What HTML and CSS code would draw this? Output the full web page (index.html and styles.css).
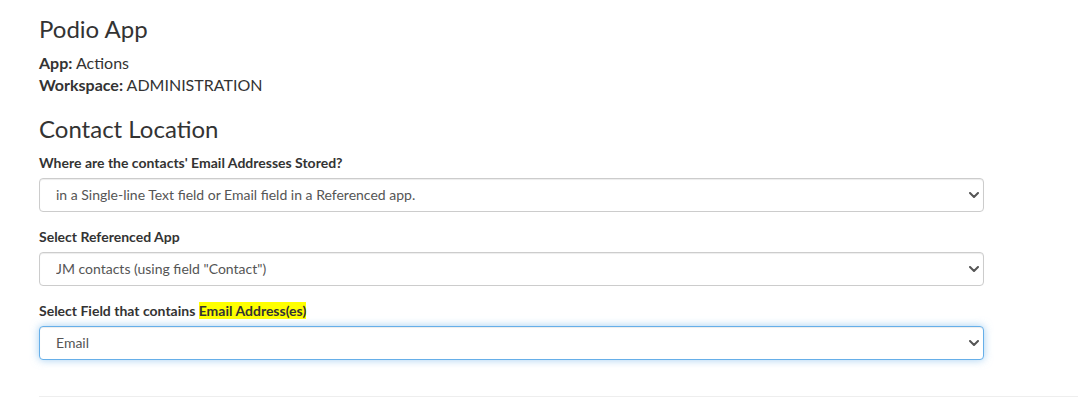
FILE: index.html
```html
<!DOCTYPE html>
<html>
<head>
<meta charset="utf-8">
<link rel="stylesheet" href="styles.css">
</head>
<body>
<div class="page">
  <h3 class="title">Podio App</h3>
  <div class="meta">
    <div><b>App:</b> Actions</div>
    <div><b>Workspace:</b> ADMINISTRATION</div>
  </div>
  <h3 class="section">Contact Location</h3>
  <form class="form">
    <div class="form-group">
      <label class="label">Where are the contacts' Email Addresses Stored?</label>
      <div class="select-wrap">
        <select class="form-control">
          <option>in a Single-line Text field or Email field in a Referenced app.</option>
        </select>
        <svg class="chev" width="10" height="6" viewBox="0 0 10 6"><path d="M1 1 L5 5 L9 1" fill="none" stroke="#555" stroke-width="2" stroke-linecap="round" stroke-linejoin="round"/></svg>
      </div>
    </div>
    <div class="form-group">
      <label class="label">Select Referenced App</label>
      <div class="select-wrap">
        <select class="form-control">
          <option>JM contacts (using field "Contact")</option>
        </select>
        <svg class="chev" width="10" height="6" viewBox="0 0 10 6"><path d="M1 1 L5 5 L9 1" fill="none" stroke="#555" stroke-width="2" stroke-linecap="round" stroke-linejoin="round"/></svg>
      </div>
    </div>
    <div class="form-group">
      <label class="label">Select Field that contains <span class="hl">Email Address(es)</span></label>
      <div class="select-wrap">
        <select class="form-control focus">
          <option>Email</option>
        </select>
        <svg class="chev" width="10" height="6" viewBox="0 0 10 6"><path d="M1 1 L5 5 L9 1" fill="none" stroke="#555" stroke-width="2" stroke-linecap="round" stroke-linejoin="round"/></svg>
      </div>
    </div>
  </form>
  <hr class="rule">
</div>
</body>
</html>
```
FILE: styles.css
```css
* { box-sizing: border-box; }
html, body { margin: 0; padding: 0; background: #fff; }
body {
  font-family: Lato, "Open Sans", sans-serif;
  font-size: 14px;
  line-height: 20px;
  color: #333;
}
.page { padding: 1px 0 0 39px; }
.title, .section {
  font-size: 24px;
  font-weight: 400;
  line-height: 26.4px;
  margin: 0 0 10px;
}
.title { margin-top: 15px; }
.meta { font-size: 16px; line-height: 22px; margin-top: 0; }
.meta b { font-weight: 700; }
.section { margin-top: 20px; }
.form { width: 945px; }
.form-group { margin-bottom: 15px; }
.label {
  display: block;
  font-weight: 700;
  font-size: 14px;
  margin-bottom: 5px;
}
.hl { background: #ffff00; }
.select-wrap { position: relative; }
.form-control {
  display: block;
  width: 100%;
  height: 34px;
  padding: 6px 12px 6px 16px;
  font-family: Lato, "Open Sans", sans-serif;
  font-size: 14px;
  line-height: 20px;
  color: #555;
  background: #fff;
  border: 1px solid #ccc;
  border-radius: 4px;
  box-shadow: inset 0 1px 1px rgba(0,0,0,.075);
  -webkit-appearance: none;
  appearance: none;
  outline: none;
}
.form-control.focus {
  border-color: #66afe9;
  box-shadow: inset 0 1px 1px rgba(0,0,0,.075), 0 0 8px rgba(102,175,233,.6);
}
.chev {
  position: absolute;
  right: 5px;
  top: 14px;
  pointer-events: none;
}
.rule {
  margin: 36px 0 0;
  border: 0;
  border-top: 1px solid #eee;
}
```
